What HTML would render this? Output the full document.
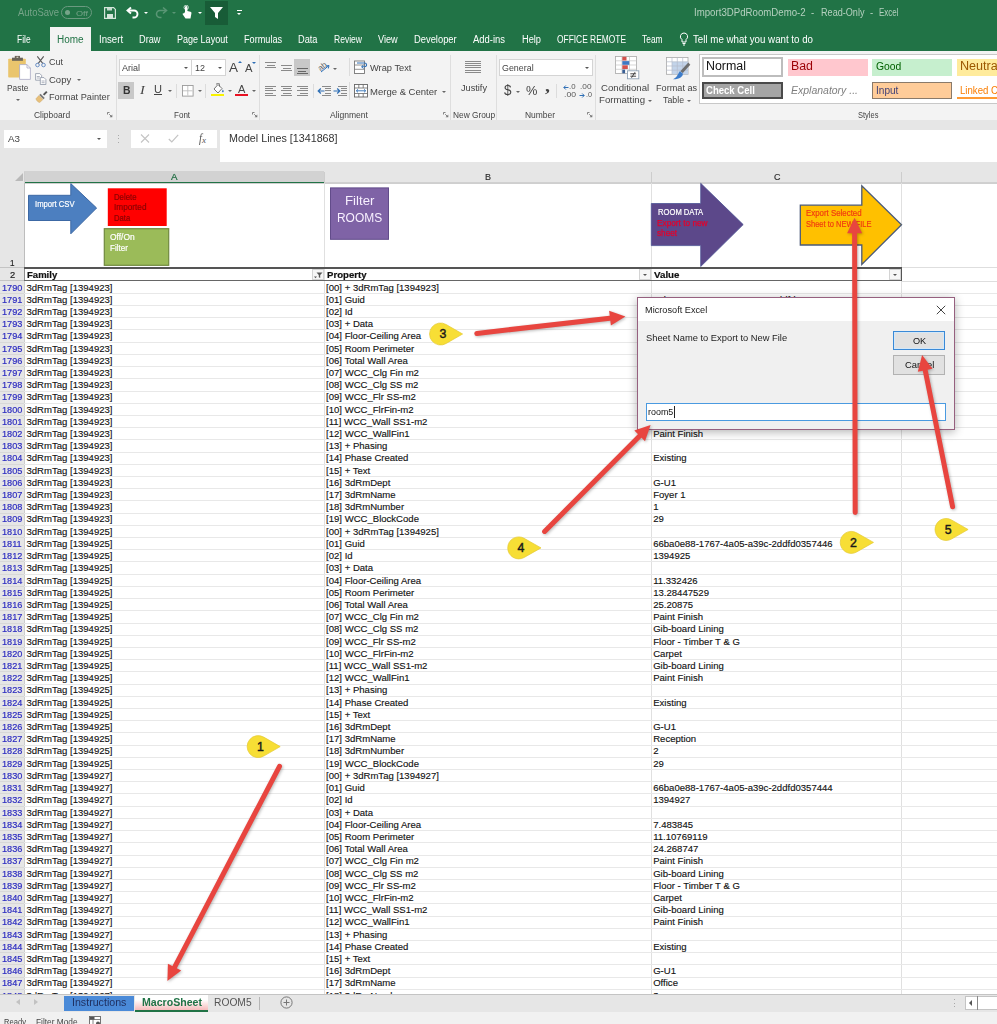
<!DOCTYPE html>
<html><head><meta charset="utf-8">
<style>
*{box-sizing:border-box;margin:0;padding:0}
html,body{width:997px;height:1024px;overflow:hidden;background:#fff;font-family:"Liberation Sans",sans-serif;}
#root{position:relative;width:997px;height:1024px;overflow:hidden;background:#fff}
.abs{position:absolute}
#title{position:absolute;left:0;top:0;width:997px;height:51px;background:#217346}
.tt{position:absolute;color:#fff;font-size:11px;white-space:nowrap}
.tab{position:absolute;top:33px;color:#fff;font-size:11px;white-space:nowrap}
#home{position:absolute;left:50px;top:27px;width:41px;height:24px;background:#f3f3f3}
#ribbon{position:absolute;left:0;top:51px;width:997px;height:69px;background:#f3f3f3}
#below{position:absolute;left:0;top:120px;width:997px;height:51px;background:#e6e6e6}
.rt{position:absolute;font-size:10.5px;color:#444;white-space:nowrap}
.gl{position:absolute;font-size:9.5px;color:#555;white-space:nowrap}
.sep{position:absolute;top:55px;width:1px;height:62px;background:#dadada}
.box{position:absolute;background:#fff;border:1px solid #c6c6c6}
/* grid */
#grid{position:absolute;left:0;top:171px;width:997px;height:822px;background:#fff;overflow:hidden}
.r{position:absolute;left:0;width:997px;height:12px;font-size:9.56px;line-height:12px;color:#111;white-space:nowrap;-webkit-text-stroke:.13px #111}
.r span{position:absolute;top:0;height:12px}
.n{left:2.1px;color:#2d2cc0;font-size:9.5px;-webkit-text-stroke:.2px #2d2cc0;transform-origin:0 50%;transform:scaleX(.965)}
.a{left:26.5px}.b{left:326.1px}.c{left:653.2px}
.vl{position:absolute;width:1px;background:#d4d4d4}
</style></head><body><div id="root">
<div class="abs" style="left:0.0px;top:0.0px;width:997.0px;height:51.0px;background:#217346;"></div>
<span style="position:absolute;left:17.6px;top:5px;height:14px;line-height:14px;font-size:10.5px;color:#76a489;white-space:pre;transform-origin:0 50%;transform:scaleX(0.9026);">AutoSave</span>
<div class="abs" style="left:61px;top:6px;width:31px;height:13px;border:1px solid #6b9a80;border-radius:7px"></div>
<div class="abs" style="left:65px;top:10px;width:5px;height:5px;border-radius:3px;background:#76a489"></div>
<span style="position:absolute;left:76.0px;top:8px;height:11px;line-height:11px;font-size:8px;color:#76a489;white-space:pre;transform-origin:0 50%;transform:scaleX(1.1403);">Off</span>
<svg class="abs" style="left:103px;top:6px" width="14" height="14" viewBox="0 0 14 14"><path d="M1.600 1.600h9l1.800 1.800v9h-10.800z" fill="none" stroke="#d4e6da" stroke-width="1.200"/><rect x="4" y="8" width="6" height="4.500" fill="#d4e6da"/><rect x="4" y="2" width="5" height="2.500" fill="#d4e6da" opacity=".9"/></svg>
<svg class="abs" style="left:126px;top:6px" width="14" height="14" viewBox="0 0 14 14"><path d="M2 4.500h6a3.500 3.500 0 0 1 0 7H6.500" fill="none" stroke="#fff" stroke-width="1.900"/><path d="M5 1.500L1.500 4.500L5 7.500" fill="none" stroke="#fff" stroke-width="1.900"/></svg>
<div class="abs" style="left:144.0px;top:12.0px;border:2.0px solid transparent;border-top:2.5px solid #fff;border-bottom:0"></div>
<svg class="abs" style="left:154px;top:6px" width="14" height="14" viewBox="0 0 14 14"><path d="M12 4.500H6a3.500 3.500 0 0 0 0 7h1.500" fill="none" stroke="#5a9675" stroke-width="1.600"/><path d="M9 1.500l3.500 3L9 7.500" fill="none" stroke="#5a9675" stroke-width="1.600"/></svg>
<div class="abs" style="left:172.0px;top:12.0px;border:2.0px solid transparent;border-top:2.5px solid #5a9675;border-bottom:0"></div>
<svg class="abs" style="left:181px;top:5px" width="12" height="15" viewBox="0 0 12 15"><path d="M4 7V2.200a1.200 1.200 0 0 1 2.400 0V6l3 .8c.8.200 1.200.8 1 1.600L9.500 13.500H4.500L1.800 9.500c-.5-.8.300-1.600 1.100-1z" fill="#fff"/><circle cx="5.200" cy="2.400" r="2.200" fill="none" stroke="#fff" stroke-width=".7"/></svg>
<div class="abs" style="left:197.5px;top:12.0px;border:2.0px solid transparent;border-top:2.5px solid #fff;border-bottom:0"></div>
<div class="abs" style="left:205.0px;top:1.0px;width:23.0px;height:24.0px;background:#185c37;"></div>
<svg class="abs" style="left:209px;top:6px" width="15" height="14" viewBox="0 0 15 14"><path d="M1 1h13l-5 6v6l-3-2V7z" fill="#fff"/></svg>
<div class="abs" style="left:236.5px;top:10.0px;width:5.0px;height:1.0px;background:#fff;"></div>
<div class="abs" style="left:237.0px;top:12.5px;border:2.0px solid transparent;border-top:2.5px solid #fff;border-bottom:0"></div>
<span style="position:absolute;left:693.6px;top:6px;height:13px;line-height:13px;font-size:10px;color:#b5d0bf;white-space:pre;transform-origin:0 50%;transform:scaleX(0.9663);">Import3DPdRoomDemo-2</span>
<span style="position:absolute;left:811.3px;top:6px;height:13px;line-height:13px;font-size:10px;color:#b5d0bf;white-space:pre;transform-origin:0 50%;transform:scaleX(0.9608);">-</span>
<span style="position:absolute;left:820.5px;top:6px;height:13px;line-height:13px;font-size:10px;color:#b5d0bf;white-space:pre;transform-origin:0 50%;transform:scaleX(0.9101);">Read-Only</span>
<span style="position:absolute;left:870.3px;top:6px;height:13px;line-height:13px;font-size:10px;color:#b5d0bf;white-space:pre;transform-origin:0 50%;transform:scaleX(0.9608);">-</span>
<span style="position:absolute;left:878.6px;top:6px;height:13px;line-height:13px;font-size:10px;color:#b5d0bf;white-space:pre;transform-origin:0 50%;transform:scaleX(0.8015);">Excel</span>
<div class="abs" style="left:50.0px;top:27.0px;width:41.0px;height:24.0px;background:#f3f3f3;"></div>
<span style="position:absolute;left:17.0px;top:33px;height:13px;line-height:13px;font-size:10px;color:#fff;white-space:pre;transform-origin:0 50%;transform:scaleX(0.8440);">File</span>
<span style="position:absolute;left:57.2px;top:33px;height:13px;line-height:13px;font-size:10px;color:#217346;white-space:pre;transform-origin:0 50%;transform:scaleX(0.9972);">Home</span>
<span style="position:absolute;left:99.3px;top:33px;height:13px;line-height:13px;font-size:10px;color:#fff;white-space:pre;transform-origin:0 50%;transform:scaleX(0.9636);">Insert</span>
<span style="position:absolute;left:139.0px;top:33px;height:13px;line-height:13px;font-size:10px;color:#fff;white-space:pre;transform-origin:0 50%;transform:scaleX(0.9213);">Draw</span>
<span style="position:absolute;left:176.5px;top:33px;height:13px;line-height:13px;font-size:10px;color:#fff;white-space:pre;transform-origin:0 50%;transform:scaleX(0.9028);">Page Layout</span>
<span style="position:absolute;left:243.7px;top:33px;height:13px;line-height:13px;font-size:10px;color:#fff;white-space:pre;transform-origin:0 50%;transform:scaleX(0.9142);">Formulas</span>
<span style="position:absolute;left:298.0px;top:33px;height:13px;line-height:13px;font-size:10px;color:#fff;white-space:pre;transform-origin:0 50%;transform:scaleX(0.9231);">Data</span>
<span style="position:absolute;left:334.0px;top:33px;height:13px;line-height:13px;font-size:10px;color:#fff;white-space:pre;transform-origin:0 50%;transform:scaleX(0.8539);">Review</span>
<span style="position:absolute;left:378.0px;top:33px;height:13px;line-height:13px;font-size:10px;color:#fff;white-space:pre;transform-origin:0 50%;transform:scaleX(0.9165);">View</span>
<span style="position:absolute;left:413.7px;top:33px;height:13px;line-height:13px;font-size:10px;color:#fff;white-space:pre;transform-origin:0 50%;transform:scaleX(0.9368);">Developer</span>
<span style="position:absolute;left:473.0px;top:33px;height:13px;line-height:13px;font-size:10px;color:#fff;white-space:pre;transform-origin:0 50%;transform:scaleX(0.9437);">Add-ins</span>
<span style="position:absolute;left:522.0px;top:33px;height:13px;line-height:13px;font-size:10px;color:#fff;white-space:pre;transform-origin:0 50%;transform:scaleX(0.9238);">Help</span>
<span style="position:absolute;left:557.0px;top:33px;height:13px;line-height:13px;font-size:10px;color:#fff;white-space:pre;transform-origin:0 50%;transform:scaleX(0.8392);">OFFICE REMOTE</span>
<span style="position:absolute;left:642.4px;top:33px;height:13px;line-height:13px;font-size:10px;color:#fff;white-space:pre;transform-origin:0 50%;transform:scaleX(0.8424);">Team</span>
<span style="position:absolute;left:693.0px;top:33px;height:13px;line-height:13px;font-size:10px;color:#fff;white-space:pre;transform-origin:0 50%;transform:scaleX(0.9724);">Tell me what you want to do</span>
<svg class="abs" style="left:679px;top:32px" width="10" height="14" viewBox="0 0 10 14"><path d="M5 1a3.600 3.600 0 0 0-2 6.600V10h4V7.600A3.600 3.600 0 0 0 5 1z" fill="none" stroke="#fff" stroke-width="1"/><path d="M3.500 11.500h3M4 13h2" stroke="#fff" stroke-width="1"/></svg>
<div class="abs" style="left:0.0px;top:51.0px;width:997.0px;height:69.0px;background:#f3f3f3;"></div>
<div class="abs" style="left:0.0px;top:120.0px;width:997.0px;height:51.0px;background:#e6e6e6;"></div>
<div class="abs" style="left:116.0px;top:55.0px;width:1.0px;height:64.5px;background:#dedede;"></div>
<div class="abs" style="left:259.0px;top:55.0px;width:1.0px;height:64.5px;background:#dedede;"></div>
<div class="abs" style="left:450.0px;top:55.0px;width:1.0px;height:64.5px;background:#dedede;"></div>
<div class="abs" style="left:496.0px;top:55.0px;width:1.0px;height:64.5px;background:#dedede;"></div>
<div class="abs" style="left:595.0px;top:55.0px;width:1.0px;height:64.5px;background:#dedede;"></div>
<span style="position:absolute;left:33.6px;top:108px;height:13px;line-height:13px;font-size:9.5px;color:#444;white-space:pre;transform-origin:0 50%;transform:scaleX(0.8878);">Clipboard</span>
<span style="position:absolute;left:173.5px;top:108px;height:13px;line-height:13px;font-size:9.5px;color:#444;white-space:pre;transform-origin:0 50%;transform:scaleX(0.8469);">Font</span>
<span style="position:absolute;left:330.0px;top:108px;height:13px;line-height:13px;font-size:9.5px;color:#444;white-space:pre;transform-origin:0 50%;transform:scaleX(0.8995);">Alignment</span>
<span style="position:absolute;left:453.4px;top:108px;height:13px;line-height:13px;font-size:9.5px;color:#444;white-space:pre;transform-origin:0 50%;transform:scaleX(0.8762);">New Group</span>
<span style="position:absolute;left:524.6px;top:108px;height:13px;line-height:13px;font-size:9.5px;color:#444;white-space:pre;transform-origin:0 50%;transform:scaleX(0.8908);">Number</span>
<span style="position:absolute;left:857.6px;top:108px;height:13px;line-height:13px;font-size:9.5px;color:#444;white-space:pre;transform-origin:0 50%;transform:scaleX(0.7885);">Styles</span>
<svg class="abs" style="left:107px;top:111.800px" width="6" height="6" viewBox="0 0 6 6"><path d="M.5 2.500V.5H2.500" fill="none" stroke="#777" stroke-width=".9"/><path d="M2.200 2.200L4.500 4.500" stroke="#777" stroke-width=".9"/><path d="M5.300 2.500V5.300H2.500z" fill="#777"/></svg>
<svg class="abs" style="left:252px;top:111.800px" width="6" height="6" viewBox="0 0 6 6"><path d="M.5 2.500V.5H2.500" fill="none" stroke="#777" stroke-width=".9"/><path d="M2.200 2.200L4.500 4.500" stroke="#777" stroke-width=".9"/><path d="M5.300 2.500V5.300H2.500z" fill="#777"/></svg>
<svg class="abs" style="left:443px;top:111.800px" width="6" height="6" viewBox="0 0 6 6"><path d="M.5 2.500V.5H2.500" fill="none" stroke="#777" stroke-width=".9"/><path d="M2.200 2.200L4.500 4.500" stroke="#777" stroke-width=".9"/><path d="M5.300 2.500V5.300H2.500z" fill="#777"/></svg>
<svg class="abs" style="left:587px;top:111.800px" width="6" height="6" viewBox="0 0 6 6"><path d="M.5 2.500V.5H2.500" fill="none" stroke="#777" stroke-width=".9"/><path d="M2.200 2.200L4.500 4.500" stroke="#777" stroke-width=".9"/><path d="M5.300 2.500V5.300H2.500z" fill="#777"/></svg>
<svg class="abs" style="left:7px;top:54px" width="26" height="28" viewBox="0 0 26 28"><rect x="1.200" y="4.800" width="17.600" height="18.700" rx=".8" fill="#eac56d"/><rect x="5" y="3.700" width="10.900" height="3.100" fill="#6a6459"/><rect x="7.800" y="1.900" width="5.200" height="2.500" fill="#6a6459"/><rect x="9.500" y="2.700" width="1.800" height="1.200" fill="#d8d2c4"/><path d="M12.600 10.600h7.400l3.400 3.400v11.400h-10.800z" fill="#fff" stroke="#a9a9c4" stroke-width=".8"/><path d="M20 10.600v3.400h3.400" fill="none" stroke="#a9a9c4" stroke-width=".8"/></svg>
<span style="position:absolute;left:6.7px;top:81px;height:13px;line-height:13px;font-size:9.5px;color:#444;white-space:pre;transform-origin:0 50%;transform:scaleX(0.8809);">Paste</span>
<div class="abs" style="left:15.7px;top:98.9px;border:2.0px solid transparent;border-top:2.5px solid #666;border-bottom:0"></div>
<svg class="abs" style="left:34.800px;top:56px" width="11" height="11.500" viewBox="0 0 11 11.500"><path d="M2.300 .3l5.800 7.500M8.700 .3L2.900 7.800" stroke="#5a5a5a" stroke-width="1.100" fill="none"/><circle cx="2.500" cy="9" r="1.800" fill="none" stroke="#6a8fc4" stroke-width="1"/><circle cx="8.500" cy="9" r="1.800" fill="none" stroke="#6a8fc4" stroke-width="1"/></svg>
<span style="position:absolute;left:49.0px;top:55px;height:13px;line-height:13px;font-size:9.5px;color:#444;white-space:pre;transform-origin:0 50%;transform:scaleX(0.9470);">Cut</span>
<svg class="abs" style="left:35px;top:73px" width="12" height="12" viewBox="0 0 12 12"><path d="M.6.600h4.200l1.800 1.800v4.800h-6z" fill="#fff" stroke="#8c94a4" stroke-width=".8"/><path d="M1.800 3.500h3M1.800 5h3" stroke="#8c94a4" stroke-width=".7"/><path d="M5.300 4.600h3.700l1.900 1.900v5h-5.600z" fill="#fff" stroke="#8c94a4" stroke-width=".8"/><path d="M6.600 8h3M6.600 9.700h3" stroke="#8c94a4" stroke-width=".7"/></svg>
<span style="position:absolute;left:49.0px;top:73px;height:13px;line-height:13px;font-size:9.5px;color:#444;white-space:pre;transform-origin:0 50%;transform:scaleX(1.0010);">Copy</span>
<div class="abs" style="left:77.0px;top:79.0px;border:2.0px solid transparent;border-top:2.5px solid #666;border-bottom:0"></div>
<svg class="abs" style="left:34.500px;top:90px" width="13" height="13" viewBox="0 0 14 14"><path d="M8.500 4.500l3.500-3.500 1.500 1.500-3.500 3.500z" fill="#555"/><path d="M6 4l4.500 4.500-1.500 1.500L4.500 5.500z" fill="#777"/><path d="M4.200 6L8.500 10.300 5 13.500c-1.500-.2-3.500-2-4-4z" fill="#e8c07a" stroke="#c9a25c" stroke-width=".5"/></svg>
<span style="position:absolute;left:49.0px;top:90px;height:13px;line-height:13px;font-size:9.5px;color:#444;white-space:pre;transform-origin:0 50%;transform:scaleX(0.9677);">Format Painter</span>
<div class="abs" style="left:118.8px;top:59.3px;width:106.9px;height:16.7px;background:#fff;border:1px solid #d4d4d4;"></div>
<div class="abs" style="left:191.0px;top:59.3px;width:1.0px;height:16.7px;background:#d4d4d4;"></div>
<span style="position:absolute;left:122.0px;top:61px;height:13px;line-height:13px;font-size:9.5px;color:#444;white-space:pre;transform-origin:0 50%;transform:scaleX(0.9471);">Arial</span>
<div class="abs" style="left:184.0px;top:67.0px;border:2.0px solid transparent;border-top:2.5px solid #555;border-bottom:0"></div>
<span style="position:absolute;left:194.6px;top:61px;height:13px;line-height:13px;font-size:9.5px;color:#444;white-space:pre;transform-origin:0 50%;transform:scaleX(0.9463);">12</span>
<div class="abs" style="left:218.0px;top:67.0px;border:2.0px solid transparent;border-top:2.5px solid #555;border-bottom:0"></div>
<span style="position:absolute;left:229.0px;top:59px;height:17px;line-height:17px;font-size:13px;color:#444;white-space:pre;transform-origin:0 50%;transform:scaleX(1.0379);">A</span>
<div class="abs" style="left:237.500px;top:61px;border:2px solid transparent;border-bottom:2.500px solid #2f6fb5;border-top:0"></div>
<span style="position:absolute;left:245.0px;top:61px;height:14px;line-height:14px;font-size:11px;color:#444;white-space:pre;transform-origin:0 50%;transform:scaleX(1.0222);">A</span>
<div class="abs" style="left:251.500px;top:61.500px;border:2px solid transparent;border-top:2.500px solid #2f6fb5;border-bottom:0"></div>
<div class="abs" style="left:118.0px;top:82.0px;width:16.0px;height:17.0px;background:#c8c8c8;"></div>
<span style="position:absolute;left:122.5px;top:83px;height:14px;line-height:14px;font-size:11.5px;color:#333;white-space:pre;font-weight:bold;transform-origin:0 50%;transform:scaleX(0.9031);">B</span>
<span style="position:absolute;left:139.5px;top:83px;height:14px;line-height:14px;font-size:11.5px;color:#444;white-space:pre;font-style:italic;transform-origin:0 50%;transform:scaleX(1.2520);font-family:'Liberation Serif',serif;">I</span>
<span style="position:absolute;left:153.5px;top:82px;height:14px;line-height:14px;font-size:11px;color:#444;white-space:pre;transform-origin:0 50%;transform:scaleX(1.0070);text-decoration:underline;">U</span>
<div class="abs" style="left:167.5px;top:89.8px;border:2.0px solid transparent;border-top:2.5px solid #666;border-bottom:0"></div>
<div class="abs" style="left:176.0px;top:84.0px;width:1.0px;height:14.0px;background:#dcdcdc;"></div>
<svg class="abs" style="left:181.800px;top:84.500px" width="12" height="12" viewBox="0 0 12 12"><rect x=".5" y=".5" width="10.600" height="10.600" fill="#fff" stroke="#9a9a9a" stroke-width=".9"/><path d="M5.800 1v9.600M1 5.800h9.600" stroke="#c0c0c0" stroke-width=".9"/></svg>
<div class="abs" style="left:197.5px;top:89.8px;border:2.0px solid transparent;border-top:2.5px solid #666;border-bottom:0"></div>
<div class="abs" style="left:205.0px;top:84.0px;width:1.0px;height:14.0px;background:#dcdcdc;"></div>
<svg class="abs" style="left:211px;top:82.500px" width="14" height="11" viewBox="0 0 14 11"><path d="M3 6l4-4.500 4 4-4 4.500z" fill="#fff" stroke="#666" stroke-width=".9"/><path d="M5.500 1.500a1.500 1.500 0 0 1 3 0v2" fill="none" stroke="#666" stroke-width=".9"/><path d="M11.800 6.500c.8 1.200 1.200 2 .6 2.600-.6.500-1.400 0-1.300-.8z" fill="#2f6fb5"/></svg>
<div class="abs" style="left:211.0px;top:93.7px;width:12.8px;height:2.8px;background:#f8f200;"></div>
<div class="abs" style="left:227.5px;top:89.8px;border:2.0px solid transparent;border-top:2.5px solid #666;border-bottom:0"></div>
<span style="position:absolute;left:238.0px;top:82px;height:14px;line-height:14px;font-size:11px;color:#444;white-space:pre;transform-origin:0 50%;transform:scaleX(1.0085);">A</span>
<div class="abs" style="left:235.2px;top:93.7px;width:13.0px;height:2.8px;background:#e81123;"></div>
<div class="abs" style="left:252.0px;top:89.8px;border:2.0px solid transparent;border-top:2.5px solid #666;border-bottom:0"></div>
<div class="abs" style="left:265.0px;top:62.0px;width:11.0px;height:1.0px;background:#8a8a8a;"></div><div class="abs" style="left:266.5px;top:64.5px;width:8.0px;height:1.0px;background:#8a8a8a;"></div><div class="abs" style="left:265.0px;top:67.0px;width:11.0px;height:1.0px;background:#8a8a8a;"></div>
<div class="abs" style="left:281.0px;top:65.0px;width:11.0px;height:1.0px;background:#8a8a8a;"></div><div class="abs" style="left:282.5px;top:67.5px;width:8.0px;height:1.0px;background:#8a8a8a;"></div><div class="abs" style="left:281.0px;top:70.0px;width:11.0px;height:1.0px;background:#8a8a8a;"></div>
<div class="abs" style="left:294.0px;top:59.0px;width:16.0px;height:16.5px;background:#c8c8c8;"></div>
<div class="abs" style="left:296.5px;top:68.0px;width:11.0px;height:1.0px;background:#666;"></div><div class="abs" style="left:298.0px;top:70.5px;width:8.0px;height:1.0px;background:#666;"></div><div class="abs" style="left:296.5px;top:73.0px;width:11.0px;height:1.0px;background:#666;"></div>
<svg class="abs" style="left:318px;top:60px" width="14" height="14" viewBox="0 0 14 14"><text x="1" y="9" font-size="8" font-family="Liberation Sans" fill="#666" transform="rotate(-40 5 8)">ab</text><path d="M3 12l8-6.500M11 5.500l-3 .5M11 5.500l-.7 3" stroke="#2f6fb5" stroke-width="1" fill="none"/></svg>
<div class="abs" style="left:333.0px;top:67.5px;border:2.0px solid transparent;border-top:2.5px solid #666;border-bottom:0"></div>
<div class="abs" style="left:349.0px;top:58.0px;width:1.0px;height:18.0px;background:#dcdcdc;"></div>
<svg class="abs" style="left:354px;top:60px" width="15" height="15" viewBox="0 0 15 15"><rect x=".5" y="1" width="10" height="12.500" fill="#fff" stroke="#777" stroke-width=".9"/><path d="M.5 5h10M.5 9.300h10" stroke="#777" stroke-width=".8"/><path d="M3 3h7.500c2.500 0 3 3.800 0 3.800H8" fill="none" stroke="#2f6fb5" stroke-width="1.100"/><path d="M9.500 5L7.500 6.800 9.500 8.500" fill="none" stroke="#2f6fb5" stroke-width="1"/></svg>
<span style="position:absolute;left:369.6px;top:61px;height:13px;line-height:13px;font-size:9.5px;color:#444;white-space:pre;transform-origin:0 50%;transform:scaleX(0.9760);">Wrap Text</span>
<div class="abs" style="left:265.0px;top:85.5px;width:11.0px;height:1.0px;background:#8a8a8a;"></div><div class="abs" style="left:265.0px;top:87.9px;width:8.0px;height:1.0px;background:#8a8a8a;"></div><div class="abs" style="left:265.0px;top:90.3px;width:11.0px;height:1.0px;background:#8a8a8a;"></div><div class="abs" style="left:265.0px;top:92.7px;width:8.0px;height:1.0px;background:#8a8a8a;"></div><div class="abs" style="left:265.0px;top:95.1px;width:11.0px;height:1.0px;background:#8a8a8a;"></div>
<div class="abs" style="left:281.0px;top:85.5px;width:11.0px;height:1.0px;background:#8a8a8a;"></div><div class="abs" style="left:282.5px;top:87.9px;width:8.0px;height:1.0px;background:#8a8a8a;"></div><div class="abs" style="left:281.0px;top:90.3px;width:11.0px;height:1.0px;background:#8a8a8a;"></div><div class="abs" style="left:282.5px;top:92.7px;width:8.0px;height:1.0px;background:#8a8a8a;"></div><div class="abs" style="left:281.0px;top:95.1px;width:11.0px;height:1.0px;background:#8a8a8a;"></div>
<div class="abs" style="left:297.0px;top:85.5px;width:11.0px;height:1.0px;background:#8a8a8a;"></div><div class="abs" style="left:300.0px;top:87.9px;width:8.0px;height:1.0px;background:#8a8a8a;"></div><div class="abs" style="left:297.0px;top:90.3px;width:11.0px;height:1.0px;background:#8a8a8a;"></div><div class="abs" style="left:300.0px;top:92.7px;width:8.0px;height:1.0px;background:#8a8a8a;"></div><div class="abs" style="left:297.0px;top:95.1px;width:11.0px;height:1.0px;background:#8a8a8a;"></div>
<div class="abs" style="left:313.0px;top:84.0px;width:1.0px;height:14.0px;background:#dcdcdc;"></div>
<div class="abs" style="left:322.0px;top:85.5px;width:9.0px;height:1.0px;background:#8a8a8a;"></div><div class="abs" style="left:325.0px;top:87.9px;width:6.0px;height:1.0px;background:#8a8a8a;"></div><div class="abs" style="left:325.0px;top:90.3px;width:6.0px;height:1.0px;background:#8a8a8a;"></div><div class="abs" style="left:325.0px;top:92.7px;width:6.0px;height:1.0px;background:#8a8a8a;"></div><div class="abs" style="left:322.0px;top:95.1px;width:9.0px;height:1.0px;background:#8a8a8a;"></div>
<svg class="abs" style="left:317px;top:87px" width="8" height="8" viewBox="0 0 8 8"><path d="M7.500 4H1.500M3.800 1.500L1.200 4l2.600 2.500" fill="none" stroke="#2f6fb5" stroke-width="1.200"/></svg>
<div class="abs" style="left:338.0px;top:85.5px;width:9.0px;height:1.0px;background:#8a8a8a;"></div><div class="abs" style="left:341.0px;top:87.9px;width:6.0px;height:1.0px;background:#8a8a8a;"></div><div class="abs" style="left:341.0px;top:90.3px;width:6.0px;height:1.0px;background:#8a8a8a;"></div><div class="abs" style="left:341.0px;top:92.7px;width:6.0px;height:1.0px;background:#8a8a8a;"></div><div class="abs" style="left:338.0px;top:95.1px;width:9.0px;height:1.0px;background:#8a8a8a;"></div>
<svg class="abs" style="left:333px;top:87px" width="8" height="8" viewBox="0 0 8 8"><path d="M.5 4h6M4.200 1.500L6.800 4 4.200 6.500" fill="none" stroke="#2f6fb5" stroke-width="1.200"/></svg>
<div class="abs" style="left:349.0px;top:82.0px;width:1.0px;height:18.0px;background:#dcdcdc;"></div>
<svg class="abs" style="left:354px;top:84px" width="14" height="14" viewBox="0 0 14 14"><rect x=".5" y=".5" width="13" height="12.500" fill="#fff" stroke="#666" stroke-width=".9"/><path d="M.5 4h13M.5 9.500h13M4.800.5v3.500M9.200.5v3.500M4.800 9.500v3.500M9.200 9.500v3.500" stroke="#666" stroke-width=".8"/><path d="M2.500 6.800h9M4 5.300L2.300 6.800 4 8.300M10 5.300l1.700 1.500L10 8.300" fill="none" stroke="#2f6fb5" stroke-width=".9"/></svg>
<span style="position:absolute;left:369.6px;top:85px;height:13px;line-height:13px;font-size:9.5px;color:#444;white-space:pre;transform-origin:0 50%;transform:scaleX(1.0021);">Merge &amp; Center</span>
<div class="abs" style="left:442.0px;top:91.0px;border:2.0px solid transparent;border-top:2.5px solid #666;border-bottom:0"></div>
<div class="abs" style="left:465.0px;top:60.5px;width:16.0px;height:1.0px;background:#8a8a8a;"></div><div class="abs" style="left:465.0px;top:62.8px;width:16.0px;height:1.0px;background:#8a8a8a;"></div><div class="abs" style="left:465.0px;top:65.1px;width:16.0px;height:1.0px;background:#8a8a8a;"></div><div class="abs" style="left:465.0px;top:67.4px;width:16.0px;height:1.0px;background:#8a8a8a;"></div><div class="abs" style="left:465.0px;top:69.7px;width:16.0px;height:1.0px;background:#8a8a8a;"></div><div class="abs" style="left:465.0px;top:72.0px;width:16.0px;height:1.0px;background:#8a8a8a;"></div>
<span style="position:absolute;left:461.0px;top:81px;height:13px;line-height:13px;font-size:9.5px;color:#444;white-space:pre;transform-origin:0 50%;transform:scaleX(0.9657);">Justify</span>
<div class="abs" style="left:499.0px;top:59.3px;width:93.5px;height:16.7px;background:#fff;border:1px solid #d4d4d4;"></div>
<span style="position:absolute;left:502.0px;top:61px;height:13px;line-height:13px;font-size:9.5px;color:#444;white-space:pre;transform-origin:0 50%;transform:scaleX(0.9350);">General</span>
<div class="abs" style="left:585.0px;top:67.0px;border:2.0px solid transparent;border-top:2.5px solid #555;border-bottom:0"></div>
<span style="position:absolute;left:503.5px;top:81px;height:18px;line-height:18px;font-size:14px;color:#444;white-space:pre;transform-origin:0 50%;transform:scaleX(0.9632);">$</span>
<div class="abs" style="left:516.0px;top:91.0px;border:2.0px solid transparent;border-top:2.5px solid #666;border-bottom:0"></div>
<span style="position:absolute;left:525.6px;top:82px;height:17px;line-height:17px;font-size:13px;color:#444;white-space:pre;transform-origin:0 50%;transform:scaleX(0.9863);">%</span>
<span style="position:absolute;left:544.5px;top:76px;height:21px;line-height:21px;font-size:17px;color:#444;white-space:pre;font-weight:bold;transform-origin:0 50%;transform:scaleX(1.1646);font-family:'Liberation Serif',serif;">,</span>
<div class="abs" style="left:556.0px;top:84.0px;width:1.0px;height:14.0px;background:#dcdcdc;"></div>
<span style="position:absolute;left:569.0px;top:82px;height:9px;line-height:9px;font-size:7px;color:#555;white-space:pre;transform-origin:0 50%;transform:scaleX(1.1134);">.0</span>
<span style="position:absolute;left:563.5px;top:90px;height:9px;line-height:9px;font-size:7px;color:#555;white-space:pre;transform-origin:0 50%;transform:scaleX(1.2332);">.00</span>
<svg class="abs" style="left:562.500px;top:85px" width="6" height="5" viewBox="0 0 6 5"><path d="M5.500 2.500H1M2.800.5L.8 2.500l2 2" fill="none" stroke="#2f6fb5" stroke-width="1"/></svg>
<span style="position:absolute;left:580.0px;top:82px;height:9px;line-height:9px;font-size:7px;color:#555;white-space:pre;transform-origin:0 50%;transform:scaleX(1.1818);">.00</span>
<span style="position:absolute;left:585.5px;top:90px;height:9px;line-height:9px;font-size:7px;color:#555;white-space:pre;transform-origin:0 50%;transform:scaleX(1.0278);">.0</span>
<svg class="abs" style="left:579px;top:92.500px" width="6" height="5" viewBox="0 0 6 5"><path d="M.5 2.500H5M3.200.5l2 2-2 2" fill="none" stroke="#2f6fb5" stroke-width="1"/></svg>
<svg class="abs" style="left:615px;top:55.500px" width="25" height="24" viewBox="0 0 25 24"><rect x=".5" y=".5" width="21" height="17" fill="#fff" stroke="#a8a8a8" stroke-width=".8"/><path d="M.5 4.800h21M.5 9h21M.5 13.300h21M7 .5v17M14.500 .5v17" stroke="#c4c4c4" stroke-width=".7"/><rect x="7.300" y=".8" width="4.200" height="3.700" fill="#d2514c"/><rect x="7.300" y="5.100" width="7" height="3.700" fill="#3d78c2"/><rect x="7.300" y="9.300" width="5.500" height="3.700" fill="#d2514c"/><rect x="7.300" y="13.600" width="2.800" height="3.700" fill="#3a5f94"/><rect x="12.500" y="14.800" width="11.300" height="8" fill="#fff" stroke="#8fa2b5" stroke-width=".9"/><path d="M15.300 17.800h5.800M15.300 20.200h5.800M20 16.200l-3.500 5.600" stroke="#333" stroke-width=".9"/></svg>
<span style="position:absolute;left:601.3px;top:81px;height:13px;line-height:13px;font-size:9.5px;color:#444;white-space:pre;transform-origin:0 50%;transform:scaleX(1.0140);">Conditional</span>
<span style="position:absolute;left:599.3px;top:93px;height:13px;line-height:13px;font-size:9.5px;color:#444;white-space:pre;transform-origin:0 50%;transform:scaleX(1.0153);">Formatting</span>
<div class="abs" style="left:648.0px;top:99.5px;border:2.0px solid transparent;border-top:2.5px solid #666;border-bottom:0"></div>
<svg class="abs" style="left:665.500px;top:57px" width="26" height="24" viewBox="0 0 26 24"><rect x=".5" y=".5" width="21.500" height="16.800" fill="#fff" stroke="#a8a8a8" stroke-width=".8"/><rect x="6" y="4.800" width="16" height="12.500" fill="#c3d4ea"/><path d="M.5 4.800h21.500M.5 9h21.500M.5 13.200h21.500M6 .5v16.800M11.300 .5v16.800M16.700 .5v16.800" stroke="#b4bccb" stroke-width=".7"/><path d="M22.300 5.500l2 2.200-7.500 8.300-2.500-1.800z" fill="#6e6e6e"/><path d="M13.800 14.200l3 2.200c.5 3-3.500 6-9.800 5.800 3.800-1.700 4.500-4.500 6.800-8z" fill="#3d7cc9"/></svg>
<span style="position:absolute;left:655.5px;top:81px;height:13px;line-height:13px;font-size:9.5px;color:#444;white-space:pre;transform-origin:0 50%;transform:scaleX(0.9612);">Format as</span>
<span style="position:absolute;left:662.5px;top:93px;height:13px;line-height:13px;font-size:9.5px;color:#444;white-space:pre;transform-origin:0 50%;transform:scaleX(0.9290);">Table</span>
<div class="abs" style="left:686.5px;top:99.5px;border:2.0px solid transparent;border-top:2.5px solid #666;border-bottom:0"></div>
<div class="abs" style="left:699.0px;top:54.0px;width:301.0px;height:49.5px;background:#fff;border:1px solid #c8c8c8;"></div>
<div class="abs" style="left:701.5px;top:56.5px;width:81.5px;height:20.5px;background:#fff;border:2px solid #bdbdbd;"></div>
<span style="position:absolute;left:706.0px;top:58px;height:16px;line-height:16px;font-size:12.5px;color:#111;white-space:pre;transform-origin:0 50%;transform:scaleX(0.9929);">Normal</span>
<div class="abs" style="left:787.5px;top:58.5px;width:80.0px;height:17.5px;background:#ffc7ce;"></div>
<span style="position:absolute;left:791.0px;top:58px;height:16px;line-height:16px;font-size:12.5px;color:#9c0006;white-space:pre;transform-origin:0 50%;transform:scaleX(0.9891);">Bad</span>
<div class="abs" style="left:872.0px;top:58.5px;width:80.0px;height:17.5px;background:#c6efce;"></div>
<span style="position:absolute;left:875.6px;top:59px;height:14px;line-height:14px;font-size:10.5px;color:#006100;white-space:pre;transform-origin:0 50%;transform:scaleX(0.9888);">Good</span>
<div class="abs" style="left:957.0px;top:58.5px;width:43.0px;height:17.5px;background:#ffeb9c;"></div>
<span style="position:absolute;left:960.4px;top:58px;height:16px;line-height:16px;font-size:12.5px;color:#9c5700;white-space:pre;transform-origin:0 50%;transform:scaleX(1.0075);">Neutral</span>
<div class="abs" style="left:702.0px;top:81.5px;width:80.5px;height:17.0px;background:#a5a5a5;border:2px solid #4a4a4a;"></div>
<span style="position:absolute;left:706.0px;top:83px;height:14px;line-height:14px;font-size:10.5px;color:#fff;white-space:pre;font-weight:bold;transform-origin:0 50%;transform:scaleX(0.9089);">Check Cell</span>
<span style="position:absolute;left:791.0px;top:83px;height:14px;line-height:14px;font-size:10.5px;color:#7f7f7f;white-space:pre;font-style:italic;transform-origin:0 50%;transform:scaleX(0.9982);">Explanatory ...</span>
<div class="abs" style="left:872.0px;top:81.5px;width:80.0px;height:17.0px;background:#ffcc99;border:1px solid #8a7a6a;"></div>
<span style="position:absolute;left:875.6px;top:83px;height:14px;line-height:14px;font-size:10.5px;color:#3f3f76;white-space:pre;transform-origin:0 50%;transform:scaleX(0.9592);">Input</span>
<span style="position:absolute;left:960.4px;top:83px;height:14px;line-height:14px;font-size:10.5px;color:#fa7d00;white-space:pre;transform-origin:0 50%;transform:scaleX(0.9163);">Linked Cell</span>
<div class="abs" style="left:957.0px;top:97.0px;width:43.0px;height:1.5px;background:#ff9a33;"></div>
<div class="abs" style="left:4.0px;top:130.0px;width:102.5px;height:17.5px;background:#fff;"></div>
<span style="position:absolute;left:8.0px;top:132px;height:13px;line-height:13px;font-size:9.5px;color:#444;white-space:pre;transform-origin:0 50%;transform:scaleX(1.0327);">A3</span>
<div class="abs" style="left:97.0px;top:138.0px;border:2.0px solid transparent;border-top:2.5px solid #555;border-bottom:0"></div>
<div class="abs" style="left:117.5px;top:134.5px;width:1.0px;height:1.0px;background:#aaa;"></div>
<div class="abs" style="left:117.5px;top:138.0px;width:1.0px;height:1.0px;background:#aaa;"></div>
<div class="abs" style="left:117.5px;top:141.5px;width:1.0px;height:1.0px;background:#aaa;"></div>
<div class="abs" style="left:131.0px;top:130.0px;width:85.5px;height:17.5px;background:#fff;"></div>
<svg class="abs" style="left:140px;top:134px" width="10" height="9" viewBox="0 0 10 9"><path d="M1 .5l8 8M9 .5l-8 8" stroke="#c4c4c4" stroke-width="1.100"/></svg>
<svg class="abs" style="left:168px;top:134px" width="11" height="9" viewBox="0 0 11 9"><path d="M.8 5l3 3L10.200.8" fill="none" stroke="#c4c4c4" stroke-width="1.200"/></svg>
<span style="position:absolute;left:198.5px;top:130px;height:16px;line-height:16px;font-size:12px;color:#555;white-space:pre;font-style:italic;transform-origin:0 50%;transform:scaleX(0.8999);font-family:'Liberation Serif',serif;">f</span>
<span style="position:absolute;left:202.0px;top:134px;height:12px;line-height:12px;font-size:9px;color:#555;white-space:pre;font-style:italic;transform-origin:0 50%;transform:scaleX(1.0000);font-family:'Liberation Serif',serif;">x</span>
<div class="abs" style="left:220.0px;top:129.6px;width:777.0px;height:32.4px;background:#fff;"></div>
<span style="position:absolute;left:229.0px;top:131px;height:14px;line-height:14px;font-size:10.5px;color:#333;white-space:pre;transform-origin:0 50%;transform:scaleX(1.0212);">Model Lines [1341868]</span>
<!--RIBBON-->
<!--FBAR-->
<!--GRIDHEAD-->

<div class="abs" style="left:0.0px;top:171.0px;width:997.0px;height:823.0px;background:#fff;"></div>
<div class="abs" style="left:0.0px;top:171.0px;width:997.0px;height:12.0px;background:#e6e6e6;"></div>
<div class="abs" style="left:24.3px;top:171.0px;width:300.0px;height:12.0px;background:#d2d2d2;"></div>
<div class="abs" style="left:24.3px;top:181.5px;width:300.0px;height:1.5px;background:#217346;"></div>
<div class="abs" style="left:24.3px;top:182.7px;width:972.7px;height:0.7px;background:#cfcfcf;"></div>
<div class="abs" style="left:324.3px;top:182.3px;width:672.7px;height:1.0px;background:#d0d0d0;"></div>
<div class="abs" style="left:23.8px;top:172.0px;width:1.0px;height:11.0px;background:#cdcdcd;"></div>
<div class="abs" style="left:323.8px;top:172.0px;width:1.0px;height:11.0px;background:#cdcdcd;"></div>
<div class="abs" style="left:650.5px;top:172.0px;width:1.0px;height:11.0px;background:#cdcdcd;"></div>
<div class="abs" style="left:900.9px;top:172.0px;width:1.0px;height:11.0px;background:#cdcdcd;"></div>
<span style="position:absolute;left:171.0px;top:170px;height:13px;line-height:13px;font-size:9.5px;color:#1b6a3e;white-space:pre;transform-origin:0 50%;transform:scaleX(1.0258);-webkit-text-stroke:.2px #1b6a3e;">A</span>
<span style="position:absolute;left:484.5px;top:170px;height:13px;line-height:13px;font-size:9.5px;color:#2a2a2a;white-space:pre;transform-origin:0 50%;transform:scaleX(0.9469);-webkit-text-stroke:.15px #2a2a2a;">B</span>
<span style="position:absolute;left:773.5px;top:170px;height:13px;line-height:13px;font-size:9.5px;color:#2a2a2a;white-space:pre;transform-origin:0 50%;transform:scaleX(0.9474);-webkit-text-stroke:.15px #2a2a2a;">C</span>
<svg class="abs" style="left:14px;top:172px" width="10" height="10" viewBox="0 0 10 10"><path d="M9 1v8H1z" fill="#b9b9b9"/></svg>
<div class="abs" style="left:0.0px;top:183.0px;width:24.3px;height:811.0px;background:#e6e6e6;"></div>
<div class="abs" style="left:23.9px;top:183.0px;width:1.0px;height:811.0px;background:#cdcdcd;"></div>
<div class="abs" style="left:23.9px;top:183.0px;width:1.0px;height:84.0px;background:#bdbdbd;"></div>
<div class="abs" style="left:23.9px;top:267.0px;width:1.0px;height:14.1px;background:#8c8c8c;"></div>
<div class="abs" style="left:323.8px;top:183.0px;width:1.0px;height:811.0px;background:#e0e0e0;"></div>
<div class="abs" style="left:650.5px;top:183.0px;width:1.0px;height:811.0px;background:#e0e0e0;"></div>
<div class="abs" style="left:900.9px;top:183.0px;width:1.0px;height:811.0px;background:#e0e0e0;"></div>
<div class="abs" style="left:0.0px;top:292.8px;width:24.3px;height:1.0px;background:#d8d8d8;"></div>
<div class="abs" style="left:24.3px;top:292.8px;width:972.7px;height:1.0px;background:#e8e8e8;"></div>
<div class="abs" style="left:0.0px;top:305.0px;width:24.3px;height:1.0px;background:#d8d8d8;"></div>
<div class="abs" style="left:24.3px;top:305.0px;width:972.7px;height:1.0px;background:#e8e8e8;"></div>
<div class="abs" style="left:0.0px;top:317.2px;width:24.3px;height:1.0px;background:#d8d8d8;"></div>
<div class="abs" style="left:24.3px;top:317.2px;width:972.7px;height:1.0px;background:#e8e8e8;"></div>
<div class="abs" style="left:0.0px;top:329.4px;width:24.3px;height:1.0px;background:#d8d8d8;"></div>
<div class="abs" style="left:24.3px;top:329.4px;width:972.7px;height:1.0px;background:#e8e8e8;"></div>
<div class="abs" style="left:0.0px;top:341.6px;width:24.3px;height:1.0px;background:#d8d8d8;"></div>
<div class="abs" style="left:24.3px;top:341.6px;width:972.7px;height:1.0px;background:#e8e8e8;"></div>
<div class="abs" style="left:0.0px;top:353.9px;width:24.3px;height:1.0px;background:#d8d8d8;"></div>
<div class="abs" style="left:24.3px;top:353.9px;width:972.7px;height:1.0px;background:#e8e8e8;"></div>
<div class="abs" style="left:0.0px;top:366.1px;width:24.3px;height:1.0px;background:#d8d8d8;"></div>
<div class="abs" style="left:24.3px;top:366.1px;width:972.7px;height:1.0px;background:#e8e8e8;"></div>
<div class="abs" style="left:0.0px;top:378.3px;width:24.3px;height:1.0px;background:#d8d8d8;"></div>
<div class="abs" style="left:24.3px;top:378.3px;width:972.7px;height:1.0px;background:#e8e8e8;"></div>
<div class="abs" style="left:0.0px;top:390.5px;width:24.3px;height:1.0px;background:#d8d8d8;"></div>
<div class="abs" style="left:24.3px;top:390.5px;width:972.7px;height:1.0px;background:#e8e8e8;"></div>
<div class="abs" style="left:0.0px;top:402.7px;width:24.3px;height:1.0px;background:#d8d8d8;"></div>
<div class="abs" style="left:24.3px;top:402.7px;width:972.7px;height:1.0px;background:#e8e8e8;"></div>
<div class="abs" style="left:0.0px;top:414.9px;width:24.3px;height:1.0px;background:#d8d8d8;"></div>
<div class="abs" style="left:24.3px;top:414.9px;width:972.7px;height:1.0px;background:#e8e8e8;"></div>
<div class="abs" style="left:0.0px;top:427.1px;width:24.3px;height:1.0px;background:#d8d8d8;"></div>
<div class="abs" style="left:24.3px;top:427.1px;width:972.7px;height:1.0px;background:#e8e8e8;"></div>
<div class="abs" style="left:0.0px;top:439.3px;width:24.3px;height:1.0px;background:#d8d8d8;"></div>
<div class="abs" style="left:24.3px;top:439.3px;width:972.7px;height:1.0px;background:#e8e8e8;"></div>
<div class="abs" style="left:0.0px;top:451.5px;width:24.3px;height:1.0px;background:#d8d8d8;"></div>
<div class="abs" style="left:24.3px;top:451.5px;width:972.7px;height:1.0px;background:#e8e8e8;"></div>
<div class="abs" style="left:0.0px;top:463.7px;width:24.3px;height:1.0px;background:#d8d8d8;"></div>
<div class="abs" style="left:24.3px;top:463.7px;width:972.7px;height:1.0px;background:#e8e8e8;"></div>
<div class="abs" style="left:0.0px;top:476.0px;width:24.3px;height:1.0px;background:#d8d8d8;"></div>
<div class="abs" style="left:24.3px;top:476.0px;width:972.7px;height:1.0px;background:#e8e8e8;"></div>
<div class="abs" style="left:0.0px;top:488.2px;width:24.3px;height:1.0px;background:#d8d8d8;"></div>
<div class="abs" style="left:24.3px;top:488.2px;width:972.7px;height:1.0px;background:#e8e8e8;"></div>
<div class="abs" style="left:0.0px;top:500.4px;width:24.3px;height:1.0px;background:#d8d8d8;"></div>
<div class="abs" style="left:24.3px;top:500.4px;width:972.7px;height:1.0px;background:#e8e8e8;"></div>
<div class="abs" style="left:0.0px;top:512.6px;width:24.3px;height:1.0px;background:#d8d8d8;"></div>
<div class="abs" style="left:24.3px;top:512.6px;width:972.7px;height:1.0px;background:#e8e8e8;"></div>
<div class="abs" style="left:0.0px;top:524.8px;width:24.3px;height:1.0px;background:#d8d8d8;"></div>
<div class="abs" style="left:24.3px;top:524.8px;width:972.7px;height:1.0px;background:#e8e8e8;"></div>
<div class="abs" style="left:0.0px;top:537.0px;width:24.3px;height:1.0px;background:#d8d8d8;"></div>
<div class="abs" style="left:24.3px;top:537.0px;width:972.7px;height:1.0px;background:#e8e8e8;"></div>
<div class="abs" style="left:0.0px;top:549.2px;width:24.3px;height:1.0px;background:#d8d8d8;"></div>
<div class="abs" style="left:24.3px;top:549.2px;width:972.7px;height:1.0px;background:#e8e8e8;"></div>
<div class="abs" style="left:0.0px;top:561.4px;width:24.3px;height:1.0px;background:#d8d8d8;"></div>
<div class="abs" style="left:24.3px;top:561.4px;width:972.7px;height:1.0px;background:#e8e8e8;"></div>
<div class="abs" style="left:0.0px;top:573.6px;width:24.3px;height:1.0px;background:#d8d8d8;"></div>
<div class="abs" style="left:24.3px;top:573.6px;width:972.7px;height:1.0px;background:#e8e8e8;"></div>
<div class="abs" style="left:0.0px;top:585.8px;width:24.3px;height:1.0px;background:#d8d8d8;"></div>
<div class="abs" style="left:24.3px;top:585.8px;width:972.7px;height:1.0px;background:#e8e8e8;"></div>
<div class="abs" style="left:0.0px;top:598.0px;width:24.3px;height:1.0px;background:#d8d8d8;"></div>
<div class="abs" style="left:24.3px;top:598.0px;width:972.7px;height:1.0px;background:#e8e8e8;"></div>
<div class="abs" style="left:0.0px;top:610.3px;width:24.3px;height:1.0px;background:#d8d8d8;"></div>
<div class="abs" style="left:24.3px;top:610.3px;width:972.7px;height:1.0px;background:#e8e8e8;"></div>
<div class="abs" style="left:0.0px;top:622.5px;width:24.3px;height:1.0px;background:#d8d8d8;"></div>
<div class="abs" style="left:24.3px;top:622.5px;width:972.7px;height:1.0px;background:#e8e8e8;"></div>
<div class="abs" style="left:0.0px;top:634.7px;width:24.3px;height:1.0px;background:#d8d8d8;"></div>
<div class="abs" style="left:24.3px;top:634.7px;width:972.7px;height:1.0px;background:#e8e8e8;"></div>
<div class="abs" style="left:0.0px;top:646.9px;width:24.3px;height:1.0px;background:#d8d8d8;"></div>
<div class="abs" style="left:24.3px;top:646.9px;width:972.7px;height:1.0px;background:#e8e8e8;"></div>
<div class="abs" style="left:0.0px;top:659.1px;width:24.3px;height:1.0px;background:#d8d8d8;"></div>
<div class="abs" style="left:24.3px;top:659.1px;width:972.7px;height:1.0px;background:#e8e8e8;"></div>
<div class="abs" style="left:0.0px;top:671.3px;width:24.3px;height:1.0px;background:#d8d8d8;"></div>
<div class="abs" style="left:24.3px;top:671.3px;width:972.7px;height:1.0px;background:#e8e8e8;"></div>
<div class="abs" style="left:0.0px;top:683.5px;width:24.3px;height:1.0px;background:#d8d8d8;"></div>
<div class="abs" style="left:24.3px;top:683.5px;width:972.7px;height:1.0px;background:#e8e8e8;"></div>
<div class="abs" style="left:0.0px;top:695.7px;width:24.3px;height:1.0px;background:#d8d8d8;"></div>
<div class="abs" style="left:24.3px;top:695.7px;width:972.7px;height:1.0px;background:#e8e8e8;"></div>
<div class="abs" style="left:0.0px;top:707.9px;width:24.3px;height:1.0px;background:#d8d8d8;"></div>
<div class="abs" style="left:24.3px;top:707.9px;width:972.7px;height:1.0px;background:#e8e8e8;"></div>
<div class="abs" style="left:0.0px;top:720.2px;width:24.3px;height:1.0px;background:#d8d8d8;"></div>
<div class="abs" style="left:24.3px;top:720.2px;width:972.7px;height:1.0px;background:#e8e8e8;"></div>
<div class="abs" style="left:0.0px;top:732.4px;width:24.3px;height:1.0px;background:#d8d8d8;"></div>
<div class="abs" style="left:24.3px;top:732.4px;width:972.7px;height:1.0px;background:#e8e8e8;"></div>
<div class="abs" style="left:0.0px;top:744.6px;width:24.3px;height:1.0px;background:#d8d8d8;"></div>
<div class="abs" style="left:24.3px;top:744.6px;width:972.7px;height:1.0px;background:#e8e8e8;"></div>
<div class="abs" style="left:0.0px;top:756.8px;width:24.3px;height:1.0px;background:#d8d8d8;"></div>
<div class="abs" style="left:24.3px;top:756.8px;width:972.7px;height:1.0px;background:#e8e8e8;"></div>
<div class="abs" style="left:0.0px;top:769.0px;width:24.3px;height:1.0px;background:#d8d8d8;"></div>
<div class="abs" style="left:24.3px;top:769.0px;width:972.7px;height:1.0px;background:#e8e8e8;"></div>
<div class="abs" style="left:0.0px;top:781.2px;width:24.3px;height:1.0px;background:#d8d8d8;"></div>
<div class="abs" style="left:24.3px;top:781.2px;width:972.7px;height:1.0px;background:#e8e8e8;"></div>
<div class="abs" style="left:0.0px;top:793.4px;width:24.3px;height:1.0px;background:#d8d8d8;"></div>
<div class="abs" style="left:24.3px;top:793.4px;width:972.7px;height:1.0px;background:#e8e8e8;"></div>
<div class="abs" style="left:0.0px;top:805.6px;width:24.3px;height:1.0px;background:#d8d8d8;"></div>
<div class="abs" style="left:24.3px;top:805.6px;width:972.7px;height:1.0px;background:#e8e8e8;"></div>
<div class="abs" style="left:0.0px;top:817.8px;width:24.3px;height:1.0px;background:#d8d8d8;"></div>
<div class="abs" style="left:24.3px;top:817.8px;width:972.7px;height:1.0px;background:#e8e8e8;"></div>
<div class="abs" style="left:0.0px;top:830.0px;width:24.3px;height:1.0px;background:#d8d8d8;"></div>
<div class="abs" style="left:24.3px;top:830.0px;width:972.7px;height:1.0px;background:#e8e8e8;"></div>
<div class="abs" style="left:0.0px;top:842.2px;width:24.3px;height:1.0px;background:#d8d8d8;"></div>
<div class="abs" style="left:24.3px;top:842.2px;width:972.7px;height:1.0px;background:#e8e8e8;"></div>
<div class="abs" style="left:0.0px;top:854.5px;width:24.3px;height:1.0px;background:#d8d8d8;"></div>
<div class="abs" style="left:24.3px;top:854.5px;width:972.7px;height:1.0px;background:#e8e8e8;"></div>
<div class="abs" style="left:0.0px;top:866.7px;width:24.3px;height:1.0px;background:#d8d8d8;"></div>
<div class="abs" style="left:24.3px;top:866.7px;width:972.7px;height:1.0px;background:#e8e8e8;"></div>
<div class="abs" style="left:0.0px;top:878.9px;width:24.3px;height:1.0px;background:#d8d8d8;"></div>
<div class="abs" style="left:24.3px;top:878.9px;width:972.7px;height:1.0px;background:#e8e8e8;"></div>
<div class="abs" style="left:0.0px;top:891.1px;width:24.3px;height:1.0px;background:#d8d8d8;"></div>
<div class="abs" style="left:24.3px;top:891.1px;width:972.7px;height:1.0px;background:#e8e8e8;"></div>
<div class="abs" style="left:0.0px;top:903.3px;width:24.3px;height:1.0px;background:#d8d8d8;"></div>
<div class="abs" style="left:24.3px;top:903.3px;width:972.7px;height:1.0px;background:#e8e8e8;"></div>
<div class="abs" style="left:0.0px;top:915.5px;width:24.3px;height:1.0px;background:#d8d8d8;"></div>
<div class="abs" style="left:24.3px;top:915.5px;width:972.7px;height:1.0px;background:#e8e8e8;"></div>
<div class="abs" style="left:0.0px;top:927.7px;width:24.3px;height:1.0px;background:#d8d8d8;"></div>
<div class="abs" style="left:24.3px;top:927.7px;width:972.7px;height:1.0px;background:#e8e8e8;"></div>
<div class="abs" style="left:0.0px;top:939.9px;width:24.3px;height:1.0px;background:#d8d8d8;"></div>
<div class="abs" style="left:24.3px;top:939.9px;width:972.7px;height:1.0px;background:#e8e8e8;"></div>
<div class="abs" style="left:0.0px;top:952.1px;width:24.3px;height:1.0px;background:#d8d8d8;"></div>
<div class="abs" style="left:24.3px;top:952.1px;width:972.7px;height:1.0px;background:#e8e8e8;"></div>
<div class="abs" style="left:0.0px;top:964.4px;width:24.3px;height:1.0px;background:#d8d8d8;"></div>
<div class="abs" style="left:24.3px;top:964.4px;width:972.7px;height:1.0px;background:#e8e8e8;"></div>
<div class="abs" style="left:0.0px;top:976.6px;width:24.3px;height:1.0px;background:#d8d8d8;"></div>
<div class="abs" style="left:24.3px;top:976.6px;width:972.7px;height:1.0px;background:#e8e8e8;"></div>
<div class="abs" style="left:0.0px;top:988.8px;width:24.3px;height:1.0px;background:#d8d8d8;"></div>
<div class="abs" style="left:24.3px;top:988.8px;width:972.7px;height:1.0px;background:#e8e8e8;"></div>
<div class="abs" style="left:0.0px;top:267.2px;width:24.3px;height:1.0px;background:#c4c4c4;"></div>
<div class="abs" style="left:0.0px;top:280.3px;width:24.3px;height:1.0px;background:#c4c4c4;"></div>
<div class="abs" style="left:901.4px;top:267.4px;width:95.6px;height:0.9px;background:#dedede;"></div>
<div class="abs" style="left:901.4px;top:280.5px;width:95.6px;height:1.0px;background:#dedede;"></div>
<div class="abs" style="left:24.3px;top:266.8px;width:877.6px;height:2.0px;background:#555;"></div>
<div class="abs" style="left:24.3px;top:279.9px;width:877.6px;height:1.2px;background:#666;"></div>
<div class="abs" style="left:900.7px;top:267.0px;width:1.3px;height:14.1px;background:#555;"></div>
<span style="position:absolute;left:9.7px;top:257px;height:12px;line-height:12px;font-size:9.3px;color:#222;white-space:pre;transform-origin:0 50%;transform:scaleX(0.8700);-webkit-text-stroke:.2px #222;">1</span>
<span style="position:absolute;left:9.8px;top:269px;height:12px;line-height:12px;font-size:9.3px;color:#222;white-space:pre;transform-origin:0 50%;transform:scaleX(1.0053);-webkit-text-stroke:.2px #222;">2</span>
<span style="position:absolute;left:26.8px;top:268px;height:13px;line-height:13px;font-size:9.5px;color:#111;white-space:pre;font-weight:bold;transform-origin:0 50%;transform:scaleX(1.0035);-webkit-text-stroke:.2px #111;">Family</span>
<span style="position:absolute;left:326.5px;top:268px;height:13px;line-height:13px;font-size:9.5px;color:#111;white-space:pre;font-weight:bold;transform-origin:0 50%;transform:scaleX(1.0111);-webkit-text-stroke:.2px #111;">Property</span>
<span style="position:absolute;left:653.5px;top:268px;height:13px;line-height:13px;font-size:9.5px;color:#111;white-space:pre;font-weight:bold;transform-origin:0 50%;transform:scaleX(1.0273);-webkit-text-stroke:.2px #111;">Value</span>
<div class="abs" style="left:312.2px;top:269.0px;width:11.5px;height:11.2px;background:#f6f6f6;border:1px solid #d4d4d4;"></div><svg class="abs" style="left:313.7px;top:271.500px" width="9" height="7" viewBox="0 0 9 7"><path d="M2.500.5h6l-2.300 2.600v3l-1.400-.9v-2.100z" fill="#555"/><path d="M0 4.500h3l-1.500 1.800z" fill="#555"/></svg>
<div class="abs" style="left:639.0px;top:269.0px;width:11.5px;height:11.2px;background:#f6f6f6;border:1px solid #d4d4d4;"></div><div class="abs" style="left:642.8px;top:274.0px;border:2.0px solid transparent;border-top:2.5px solid #555;border-bottom:0"></div>
<div class="abs" style="left:889.0px;top:269.0px;width:11.5px;height:11.2px;background:#f6f6f6;border:1px solid #d4d4d4;"></div><div class="abs" style="left:892.8px;top:274.0px;border:2.0px solid transparent;border-top:2.5px solid #555;border-bottom:0"></div>
<div class="r" style="top:281.50px"><span class="n">1790</span><span class="a">3dRmTag [1394923]</span><span class="b">[00] + 3dRmTag [1394923]</span><span class="c"></span></div>
<div class="r" style="top:293.70px"><span class="n">1791</span><span class="a">3dRmTag [1394923]</span><span class="b">[01] Guid</span><span class="c">66ba0e88-1767-4a05-a39c-2ddfd0357448</span></div>
<div class="r" style="top:305.92px"><span class="n">1792</span><span class="a">3dRmTag [1394923]</span><span class="b">[02] Id</span><span class="c">1394923</span></div>
<div class="r" style="top:318.12px"><span class="n">1793</span><span class="a">3dRmTag [1394923]</span><span class="b">[03] + Data</span><span class="c"></span></div>
<div class="r" style="top:330.33px"><span class="n">1794</span><span class="a">3dRmTag [1394923]</span><span class="b">[04] Floor-Ceiling Area</span><span class="c">16.4</span></div>
<div class="r" style="top:342.55px"><span class="n">1795</span><span class="a">3dRmTag [1394923]</span><span class="b">[05] Room Perimeter</span><span class="c">17.2</span></div>
<div class="r" style="top:354.75px"><span class="n">1796</span><span class="a">3dRmTag [1394923]</span><span class="b">[06] Total Wall Area</span><span class="c">31.2</span></div>
<div class="r" style="top:366.96px"><span class="n">1797</span><span class="a">3dRmTag [1394923]</span><span class="b">[07] WCC_Clg Fin m2</span><span class="c">Paint Finish</span></div>
<div class="r" style="top:379.18px"><span class="n">1798</span><span class="a">3dRmTag [1394923]</span><span class="b">[08] WCC_Clg SS m2</span><span class="c">Gib-board Lining</span></div>
<div class="r" style="top:391.39px"><span class="n">1799</span><span class="a">3dRmTag [1394923]</span><span class="b">[09] WCC_Flr SS-m2</span><span class="c">Floor - Timber T & G</span></div>
<div class="r" style="top:403.60px"><span class="n">1800</span><span class="a">3dRmTag [1394923]</span><span class="b">[10] WCC_FlrFin-m2</span><span class="c">Carpet</span></div>
<div class="r" style="top:415.81px"><span class="n">1801</span><span class="a">3dRmTag [1394923]</span><span class="b">[11] WCC_Wall SS1-m2</span><span class="c">Gib-board Lining</span></div>
<div class="r" style="top:428.02px"><span class="n">1802</span><span class="a">3dRmTag [1394923]</span><span class="b">[12] WCC_WallFin1</span><span class="c">Paint Finish</span></div>
<div class="r" style="top:440.23px"><span class="n">1803</span><span class="a">3dRmTag [1394923]</span><span class="b">[13] + Phasing</span><span class="c"></span></div>
<div class="r" style="top:452.44px"><span class="n">1804</span><span class="a">3dRmTag [1394923]</span><span class="b">[14] Phase Created</span><span class="c">Existing</span></div>
<div class="r" style="top:464.65px"><span class="n">1805</span><span class="a">3dRmTag [1394923]</span><span class="b">[15] + Text</span><span class="c"></span></div>
<div class="r" style="top:476.86px"><span class="n">1806</span><span class="a">3dRmTag [1394923]</span><span class="b">[16] 3dRmDept</span><span class="c">G-U1</span></div>
<div class="r" style="top:489.06px"><span class="n">1807</span><span class="a">3dRmTag [1394923]</span><span class="b">[17] 3dRmName</span><span class="c">Foyer 1</span></div>
<div class="r" style="top:501.28px"><span class="n">1808</span><span class="a">3dRmTag [1394923]</span><span class="b">[18] 3dRmNumber</span><span class="c">1</span></div>
<div class="r" style="top:513.48px"><span class="n">1809</span><span class="a">3dRmTag [1394923]</span><span class="b">[19] WCC_BlockCode</span><span class="c">29</span></div>
<div class="r" style="top:525.69px"><span class="n">1810</span><span class="a">3dRmTag [1394925]</span><span class="b">[00] + 3dRmTag [1394925]</span><span class="c"></span></div>
<div class="r" style="top:537.90px"><span class="n">1811</span><span class="a">3dRmTag [1394925]</span><span class="b">[01] Guid</span><span class="c">66ba0e88-1767-4a05-a39c-2ddfd0357446</span></div>
<div class="r" style="top:550.12px"><span class="n">1812</span><span class="a">3dRmTag [1394925]</span><span class="b">[02] Id</span><span class="c">1394925</span></div>
<div class="r" style="top:562.33px"><span class="n">1813</span><span class="a">3dRmTag [1394925]</span><span class="b">[03] + Data</span><span class="c"></span></div>
<div class="r" style="top:574.53px"><span class="n">1814</span><span class="a">3dRmTag [1394925]</span><span class="b">[04] Floor-Ceiling Area</span><span class="c">11.332426</span></div>
<div class="r" style="top:586.74px"><span class="n">1815</span><span class="a">3dRmTag [1394925]</span><span class="b">[05] Room Perimeter</span><span class="c">13.28447529</span></div>
<div class="r" style="top:598.95px"><span class="n">1816</span><span class="a">3dRmTag [1394925]</span><span class="b">[06] Total Wall Area</span><span class="c">25.20875</span></div>
<div class="r" style="top:611.16px"><span class="n">1817</span><span class="a">3dRmTag [1394925]</span><span class="b">[07] WCC_Clg Fin m2</span><span class="c">Paint Finish</span></div>
<div class="r" style="top:623.38px"><span class="n">1818</span><span class="a">3dRmTag [1394925]</span><span class="b">[08] WCC_Clg SS m2</span><span class="c">Gib-board Lining</span></div>
<div class="r" style="top:635.59px"><span class="n">1819</span><span class="a">3dRmTag [1394925]</span><span class="b">[09] WCC_Flr SS-m2</span><span class="c">Floor - Timber T & G</span></div>
<div class="r" style="top:647.79px"><span class="n">1820</span><span class="a">3dRmTag [1394925]</span><span class="b">[10] WCC_FlrFin-m2</span><span class="c">Carpet</span></div>
<div class="r" style="top:660.00px"><span class="n">1821</span><span class="a">3dRmTag [1394925]</span><span class="b">[11] WCC_Wall SS1-m2</span><span class="c">Gib-board Lining</span></div>
<div class="r" style="top:672.21px"><span class="n">1822</span><span class="a">3dRmTag [1394925]</span><span class="b">[12] WCC_WallFin1</span><span class="c">Paint Finish</span></div>
<div class="r" style="top:684.42px"><span class="n">1823</span><span class="a">3dRmTag [1394925]</span><span class="b">[13] + Phasing</span><span class="c"></span></div>
<div class="r" style="top:696.63px"><span class="n">1824</span><span class="a">3dRmTag [1394925]</span><span class="b">[14] Phase Created</span><span class="c">Existing</span></div>
<div class="r" style="top:708.85px"><span class="n">1825</span><span class="a">3dRmTag [1394925]</span><span class="b">[15] + Text</span><span class="c"></span></div>
<div class="r" style="top:721.06px"><span class="n">1826</span><span class="a">3dRmTag [1394925]</span><span class="b">[16] 3dRmDept</span><span class="c">G-U1</span></div>
<div class="r" style="top:733.26px"><span class="n">1827</span><span class="a">3dRmTag [1394925]</span><span class="b">[17] 3dRmName</span><span class="c">Reception</span></div>
<div class="r" style="top:745.47px"><span class="n">1828</span><span class="a">3dRmTag [1394925]</span><span class="b">[18] 3dRmNumber</span><span class="c">2</span></div>
<div class="r" style="top:757.68px"><span class="n">1829</span><span class="a">3dRmTag [1394925]</span><span class="b">[19] WCC_BlockCode</span><span class="c">29</span></div>
<div class="r" style="top:769.89px"><span class="n">1830</span><span class="a">3dRmTag [1394927]</span><span class="b">[00] + 3dRmTag [1394927]</span><span class="c"></span></div>
<div class="r" style="top:782.11px"><span class="n">1831</span><span class="a">3dRmTag [1394927]</span><span class="b">[01] Guid</span><span class="c">66ba0e88-1767-4a05-a39c-2ddfd0357444</span></div>
<div class="r" style="top:794.32px"><span class="n">1832</span><span class="a">3dRmTag [1394927]</span><span class="b">[02] Id</span><span class="c">1394927</span></div>
<div class="r" style="top:806.53px"><span class="n">1833</span><span class="a">3dRmTag [1394927]</span><span class="b">[03] + Data</span><span class="c"></span></div>
<div class="r" style="top:818.73px"><span class="n">1834</span><span class="a">3dRmTag [1394927]</span><span class="b">[04] Floor-Ceiling Area</span><span class="c">7.483845</span></div>
<div class="r" style="top:830.94px"><span class="n">1835</span><span class="a">3dRmTag [1394927]</span><span class="b">[05] Room Perimeter</span><span class="c">11.10769119</span></div>
<div class="r" style="top:843.15px"><span class="n">1836</span><span class="a">3dRmTag [1394927]</span><span class="b">[06] Total Wall Area</span><span class="c">24.268747</span></div>
<div class="r" style="top:855.37px"><span class="n">1837</span><span class="a">3dRmTag [1394927]</span><span class="b">[07] WCC_Clg Fin m2</span><span class="c">Paint Finish</span></div>
<div class="r" style="top:867.58px"><span class="n">1838</span><span class="a">3dRmTag [1394927]</span><span class="b">[08] WCC_Clg SS m2</span><span class="c">Gib-board Lining</span></div>
<div class="r" style="top:879.79px"><span class="n">1839</span><span class="a">3dRmTag [1394927]</span><span class="b">[09] WCC_Flr SS-m2</span><span class="c">Floor - Timber T & G</span></div>
<div class="r" style="top:891.99px"><span class="n">1840</span><span class="a">3dRmTag [1394927]</span><span class="b">[10] WCC_FlrFin-m2</span><span class="c">Carpet</span></div>
<div class="r" style="top:904.20px"><span class="n">1841</span><span class="a">3dRmTag [1394927]</span><span class="b">[11] WCC_Wall SS1-m2</span><span class="c">Gib-board Lining</span></div>
<div class="r" style="top:916.41px"><span class="n">1842</span><span class="a">3dRmTag [1394927]</span><span class="b">[12] WCC_WallFin1</span><span class="c">Paint Finish</span></div>
<div class="r" style="top:928.62px"><span class="n">1843</span><span class="a">3dRmTag [1394927]</span><span class="b">[13] + Phasing</span><span class="c"></span></div>
<div class="r" style="top:940.84px"><span class="n">1844</span><span class="a">3dRmTag [1394927]</span><span class="b">[14] Phase Created</span><span class="c">Existing</span></div>
<div class="r" style="top:953.05px"><span class="n">1845</span><span class="a">3dRmTag [1394927]</span><span class="b">[15] + Text</span><span class="c"></span></div>
<div class="r" style="top:965.25px"><span class="n">1846</span><span class="a">3dRmTag [1394927]</span><span class="b">[16] 3dRmDept</span><span class="c">G-U1</span></div>
<div class="r" style="top:977.46px"><span class="n">1847</span><span class="a">3dRmTag [1394927]</span><span class="b">[17] 3dRmName</span><span class="c">Office</span></div>
<div class="r" style="top:989.67px"><span class="n">1848</span><span class="a">3dRmTag [1394927]</span><span class="b">[18] 3dRmNumber</span><span class="c">3</span></div>

<svg class="abs" style="left:0;top:0" width="997" height="1024" viewBox="0 0 997 1024">
<polygon points="28.5,195.3 70.8,195.3 70.8,183.6 96.6,208 70.8,233.800 70.8,220.500 28.5,220.500" fill="#4c7fc0" stroke="#3c68a4" stroke-width="1"/>
<rect x="107.8" y="188.3" width="58.9" height="37.7" fill="#ff0000"/>
<rect x="104.300" y="228.700" width="64.400" height="36.600" fill="#9bbb59" stroke="#71893f" stroke-width="1.200"/>
<rect x="330.500" y="187.900" width="58" height="51.400" fill="#7f63a6" stroke="#624c8a" stroke-width="1"/>
<polygon points="651.3,203.5 700.7,203.5 700.7,183.3 743.2,224.6 700.7,266.5 700.7,245.6 651.3,245.6" fill="#5c488a" stroke="#4c5496" stroke-width=".8"/>
<polygon points="800.3,205.2 861.8,205.2 861.8,185.8 901.5,224.800 861.8,264.4 861.8,245 800.3,245" fill="#ffc000" stroke="#4a5a78" stroke-width="1.300" stroke-linejoin="miter"/>
</svg>
<span style="position:absolute;left:34.6px;top:198px;height:12px;line-height:12px;font-size:8.8px;color:#fff;white-space:pre;transform-origin:0 50%;transform:scaleX(0.8707);-webkit-text-stroke:.2px #fff;">Import CSV</span>
<span style="position:absolute;left:113.5px;top:191px;height:12px;line-height:12px;font-size:8.8px;color:#8a0000;white-space:pre;transform-origin:0 50%;transform:scaleX(0.8845);-webkit-text-stroke:.2px #8a0000;">Delete</span>
<span style="position:absolute;left:113.5px;top:201px;height:12px;line-height:12px;font-size:8.8px;color:#8a0000;white-space:pre;transform-origin:0 50%;transform:scaleX(0.9358);-webkit-text-stroke:.2px #8a0000;">Imported</span>
<span style="position:absolute;left:113.5px;top:212px;height:12px;line-height:12px;font-size:8.8px;color:#8a0000;white-space:pre;transform-origin:0 50%;transform:scaleX(0.8715);-webkit-text-stroke:.2px #8a0000;">Data</span>
<span style="position:absolute;left:109.7px;top:231px;height:12px;line-height:12px;font-size:8.8px;color:#fff;white-space:pre;transform-origin:0 50%;transform:scaleX(0.9550);-webkit-text-stroke:.2px #fff;">Off/On</span>
<span style="position:absolute;left:109.7px;top:242px;height:12px;line-height:12px;font-size:8.8px;color:#fff;white-space:pre;transform-origin:0 50%;transform:scaleX(0.9102);-webkit-text-stroke:.2px #fff;">Filter</span>
<span style="position:absolute;left:344.5px;top:193px;height:16px;line-height:16px;font-size:12.5px;color:#f8f0ff;white-space:pre;transform-origin:0 50%;transform:scaleX(1.0584);">Filter</span>
<span style="position:absolute;left:337.1px;top:210px;height:16px;line-height:16px;font-size:12.5px;color:#f8f0ff;white-space:pre;transform-origin:0 50%;transform:scaleX(0.9550);">ROOMS</span>
<span style="position:absolute;left:657.7px;top:206px;height:12px;line-height:12px;font-size:8.8px;color:#fff;white-space:pre;transform-origin:0 50%;transform:scaleX(0.8676);-webkit-text-stroke:.2px #fff;">ROOM DATA</span>
<span style="position:absolute;left:657.0px;top:217px;height:12px;line-height:12px;font-size:8.8px;color:#e3002b;white-space:pre;transform-origin:0 50%;transform:scaleX(0.9404);-webkit-text-stroke:.25px #e3002b;">Export to new</span>
<span style="position:absolute;left:657.0px;top:227px;height:12px;line-height:12px;font-size:8.8px;color:#e3002b;white-space:pre;transform-origin:0 50%;transform:scaleX(0.9290);-webkit-text-stroke:.25px #e3002b;">sheet</span>
<span style="position:absolute;left:805.8px;top:207px;height:12px;line-height:12px;font-size:8.8px;color:#f03a10;white-space:pre;transform-origin:0 50%;transform:scaleX(0.8950);-webkit-text-stroke:.2px #f03a10;">Export Selected</span>
<span style="position:absolute;left:805.8px;top:218px;height:12px;line-height:12px;font-size:8.8px;color:#f03a10;white-space:pre;transform-origin:0 50%;transform:scaleX(0.8530);-webkit-text-stroke:.2px #f03a10;">Sheet to NEW FILE</span>
<div class="abs" style="left:0.0px;top:993.7px;width:997.0px;height:18.3px;background:#e6e6e6;"></div>
<div class="abs" style="left:0.0px;top:993.5px;width:997.0px;height:1.0px;background:#c4c4c4;"></div>
<div class="abs" style="left:0.0px;top:1011.6px;width:997.0px;height:0.9px;background:#d2d2d2;"></div>
<div class="abs" style="left:0.0px;top:1012.0px;width:997.0px;height:12.0px;background:#f1f1f1;"></div>
<div class="abs" style="left:15.500px;top:999px;border:3.500px solid transparent;border-right:4px solid #c2c2c2;border-left:0"></div>
<div class="abs" style="left:34px;top:999px;border:3.500px solid transparent;border-left:4px solid #c2c2c2;border-right:0"></div>
<div class="abs" style="left:63.9px;top:996.0px;width:69.9px;height:14.7px;background:#4a8ad8;"></div>
<span style="position:absolute;left:71.9px;top:996px;height:13px;line-height:13px;font-size:10px;color:#1f2f5f;white-space:pre;transform-origin:0 50%;transform:scaleX(1.0639);">Instructions</span>
<div class="abs" style="left:135.4px;top:995.0px;width:72.6px;height:16.0px;background:#fff;background:linear-gradient(#fff 30%,#f6b4b4 100%);"></div>
<div class="abs" style="left:135.4px;top:1010.0px;width:72.6px;height:1.8px;background:#217346;"></div>
<span style="position:absolute;left:141.5px;top:996px;height:13px;line-height:13px;font-size:10px;color:#217346;white-space:pre;font-weight:bold;transform-origin:0 50%;transform:scaleX(1.0584);">MacroSheet</span>
<span style="position:absolute;left:214.4px;top:996px;height:13px;line-height:13px;font-size:10px;color:#555;white-space:pre;transform-origin:0 50%;transform:scaleX(1.0254);">ROOM5</span>
<div class="abs" style="left:259.0px;top:997.0px;width:1.0px;height:13.0px;background:#b5b5b5;"></div>
<svg class="abs" style="left:279.500px;top:996.200px" width="13" height="13" viewBox="0 0 13 13"><circle cx="6.500" cy="6.500" r="5.600" fill="none" stroke="#777" stroke-width="1"/><path d="M6.500 3.500v6M3.500 6.500h6" stroke="#777" stroke-width="1"/></svg>
<div class="abs" style="left:953.7px;top:999.2px;width:1.1px;height:1.1px;background:#a8a8a8;"></div>
<div class="abs" style="left:953.7px;top:1002.5px;width:1.1px;height:1.1px;background:#a8a8a8;"></div>
<div class="abs" style="left:953.7px;top:1005.8px;width:1.1px;height:1.1px;background:#a8a8a8;"></div>
<div class="abs" style="left:964.5px;top:996.0px;width:33.5px;height:13.8px;background:#fff;border:1px solid #c4c4c4;"></div>
<div class="abs" style="left:976.8px;top:996.0px;width:1.0px;height:13.8px;background:#8a8a8a;"></div>
<div class="abs" style="left:969px;top:1000px;border:3px solid transparent;border-right:3.500px solid #555;border-left:0"></div>
<span style="position:absolute;left:3.9px;top:1015px;height:13px;line-height:13px;font-size:9.5px;color:#444;white-space:pre;transform-origin:0 50%;transform:scaleX(0.8011);">Ready</span>
<span style="position:absolute;left:35.5px;top:1015px;height:13px;line-height:13px;font-size:9.5px;color:#444;white-space:pre;transform-origin:0 50%;transform:scaleX(0.8734);">Filter Mode</span>
<svg class="abs" style="left:88.500px;top:1015.500px" width="12" height="10" viewBox="0 0 12 10"><rect x=".5" y=".5" width="11" height="9" fill="#fff" stroke="#666" stroke-width=".9"/><path d="M.5 3.500h11M4 3.500v6" stroke="#666" stroke-width=".8"/><rect x="1" y="1" width="4.500" height="2.500" fill="#555"/><circle cx="9" cy="7.500" r="2" fill="#555"/></svg>
<div class="abs" style="left:637px;top:297px;width:317.500px;height:132.500px;background:#f0f0f0;border:1px solid #96607f;box-shadow:0 2px 9px rgba(0,0,0,.3)"></div>
<div class="abs" style="left:638.0px;top:298.0px;width:315.5px;height:23.0px;background:#fff;"></div>
<span style="position:absolute;left:644.8px;top:303px;height:13px;line-height:13px;font-size:9.7px;color:#222;white-space:pre;transform-origin:0 50%;transform:scaleX(0.9474);">Microsoft Excel</span>
<svg class="abs" style="left:936px;top:304.500px" width="10" height="10" viewBox="0 0 10 10"><path d="M.8.800l8.400 8.400M9.200.8L.8 9.200" stroke="#444" stroke-width="1"/></svg>
<span style="position:absolute;left:646.4px;top:331px;height:13px;line-height:13px;font-size:9.7px;color:#222;white-space:pre;transform-origin:0 50%;transform:scaleX(0.9636);">Sheet Name to Export to New File</span>
<div class="abs" style="left:893.4px;top:330.9px;width:52.0px;height:19.0px;background:#e1e1e1;border:1.500px solid #3a89d6;box-shadow:inset 0 0 0 1px #d4e8f8;"></div>
<span style="position:absolute;left:912.9px;top:334px;height:13px;line-height:13px;font-size:9.6px;color:#111;white-space:pre;transform-origin:0 50%;transform:scaleX(0.9517);">OK</span>
<div class="abs" style="left:893.4px;top:355.2px;width:52.0px;height:19.4px;background:#e1e1e1;border:1px solid #b2b2b2;"></div>
<span style="position:absolute;left:904.8px;top:358px;height:13px;line-height:13px;font-size:9.6px;color:#111;white-space:pre;transform-origin:0 50%;transform:scaleX(0.9805);">Cancel</span>
<div class="abs" style="left:646.0px;top:402.6px;width:299.8px;height:18.4px;background:#fff;border:1px solid #4a9ae0;"></div>
<span style="position:absolute;left:648.0px;top:405px;height:13px;line-height:13px;font-size:9.5px;color:#111;white-space:pre;transform-origin:0 50%;transform:scaleX(0.9395);">room5</span>
<div class="abs" style="left:674.0px;top:406.0px;width:1.0px;height:12.0px;background:#222;"></div>
<svg class="abs" style="left:0;top:0;filter:drop-shadow(1px 1.500px 1.500px rgba(0,0,0,.28))" width="997" height="1024" viewBox="0 0 997 1024">
<line x1="279.5" y1="766.3" x2="173.7" y2="968.9" stroke="#e8453f" stroke-width="5" stroke-linecap="round"/><polygon points="167.9,963.7 167.4,980.9 181.2,970.6" fill="#e8453f"/>
<line x1="855.2" y1="512.5" x2="854.6" y2="231.3" stroke="#e8453f" stroke-width="5" stroke-linecap="round"/><polygon points="862.1,233.3 854.6,217.8 847.1,233.3" fill="#e8453f"/>
<line x1="476.8" y1="333.4" x2="612.0" y2="317.9" stroke="#e8453f" stroke-width="5" stroke-linecap="round"/><polygon points="610.9,325.6 625.4,316.4 609.1,310.7" fill="#e8453f"/>
<line x1="544.6" y1="531.4" x2="641.1" y2="434.5" stroke="#e8453f" stroke-width="5" stroke-linecap="round"/><polygon points="645.0,441.2 650.6,424.9 634.3,430.6" fill="#e8453f"/>
<line x1="952.6" y1="506.8" x2="924.8" y2="368.2" stroke="#e8453f" stroke-width="5" stroke-linecap="round"/><polygon points="932.5,368.7 922.1,355.0 917.8,371.7" fill="#e8453f"/>
</svg>
<svg class="abs" style="left:0;top:0" width="997" height="1024" viewBox="0 0 997 1024">
<path d="M280.2,746.6 L263.7,737.1 A11,11 0 1 0 263.7,756.1 Z" fill="#f7de35" stroke="#e4c832" stroke-width=".7"/><text x="260.4" y="751.0" font-size="12.3" text-anchor="middle" fill="#1a1a1a" stroke="#1a1a1a" stroke-width=".45" font-family="Liberation Sans">1</text>
<path d="M873.5,542.4 L856.6,532.8 A11,11 0 1 0 856.6,552.0 Z" fill="#f7de35" stroke="#e4c832" stroke-width=".7"/><text x="853.4" y="546.8" font-size="12.3" text-anchor="middle" fill="#1a1a1a" stroke="#1a1a1a" stroke-width=".45" font-family="Liberation Sans">2</text>
<path d="M462.6,334.0 L446.1,324.5 A11,11 0 1 0 446.1,343.5 Z" fill="#f7de35" stroke="#e4c832" stroke-width=".7"/><text x="442.8" y="338.4" font-size="12.3" text-anchor="middle" fill="#1a1a1a" stroke="#1a1a1a" stroke-width=".45" font-family="Liberation Sans">3</text>
<path d="M541.0,547.9 L524.1,538.3 A11,11 0 1 0 524.1,557.5 Z" fill="#f7de35" stroke="#e4c832" stroke-width=".7"/><text x="520.9" y="552.3" font-size="12.3" text-anchor="middle" fill="#1a1a1a" stroke="#1a1a1a" stroke-width=".45" font-family="Liberation Sans">4</text>
<path d="M968.1,529.5 L951.4,519.9 A11,11 0 1 0 951.4,539.1 Z" fill="#f7de35" stroke="#e4c832" stroke-width=".7"/><text x="948.1" y="533.9" font-size="12.3" text-anchor="middle" fill="#1a1a1a" stroke="#1a1a1a" stroke-width=".45" font-family="Liberation Sans">5</text>
</svg>
<!--BOTTOM-->
<!--DIALOG-->
<!--ARROWS-->
</div></body></html>
